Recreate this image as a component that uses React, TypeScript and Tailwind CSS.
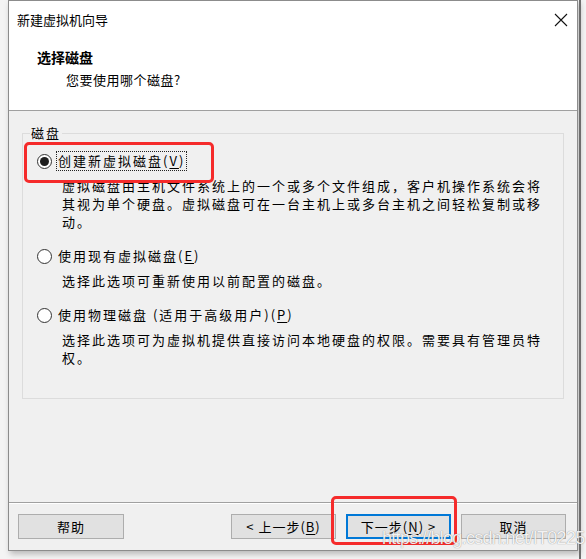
import React from 'react';

const font = { fontFamily: '"Noto Sans CJK SC", "Noto Sans", sans-serif' };

interface RadioProps {
  checked?: boolean;
}

const Radio: React.FC<RadioProps> = ({ checked }) => (
  <span className="w-[15px] h-[15px] rounded-full border border-[#333333] bg-white flex items-center justify-center shrink-0">
    {checked && <span className="w-[9px] h-[9px] rounded-full bg-[#1f1f1f]" />}
  </span>
);

const Key: React.FC<{ k: string }> = ({ k }) => (
  <>
    (<span className="underline underline-offset-2">{k}</span>)
  </>
);

const App: React.FC = () => {
  return (
    <div className="relative w-[586px] h-[559px] bg-[#f4f4f4] flex overflow-hidden" style={font}>
      {/* left gap */}
      <div className="w-[8px] shrink-0" />

      {/* Dialog */}
      <div className="w-[570px] h-[551px] bg-[#f0f0f0] border border-[#8c8c8c] flex flex-col shadow-[2px_3px_6px_rgba(0,0,0,0.25)] shrink-0 text-[#000000]">
        {/* Title bar */}
        <div className="h-[37px] bg-white flex items-center justify-between pl-[8px] pr-[8px]">
          <span className="text-[13px] leading-[18px]">新建虚拟机向导</span>
          <svg width="14" height="14" viewBox="0 0 14 14" className="mr-[1px]">
            <path d="M1 1 L13 13 M13 1 L1 13" stroke="#111" strokeWidth="1.1" />
          </svg>
        </div>

        {/* Header */}
        <div className="h-[72px] bg-white flex flex-col pt-[9px]">
          <span className="pl-[28px] text-[14px] leading-[20px] font-bold">选择磁盘</span>
          <span className="pl-[57px] mt-[4px] text-[13px] leading-[18px] tracking-[0.5px]">您要使用哪个磁盘?</span>
        </div>
        <div className="h-px bg-[#a0a0a0]" />

        {/* Body */}
        <div className="flex-1 flex flex-col px-[13px] pt-[22px]">
          <div className="relative h-[266px] border border-[#dcdcdc] pt-[15px] pl-[14px] text-[13px] tracking-[2px]">
            <span className="absolute -top-[10px] left-[7px] px-[1px] bg-[#f0f0f0] leading-[18px]">磁盘</span>

            <div className="h-[24px] flex items-center gap-[5px]">
              <Radio checked />
              <span className="outline outline-1 outline-dotted outline-[#222] px-[1px] leading-[18px]">
                创建新虚拟磁盘<Key k="V" />
              </span>
            </div>
            <div className="mt-[4px] pl-[25px] leading-[18px] whitespace-nowrap">
              虚拟磁盘由主机文件系统上的一个或多个文件组成，客户机操作系统会将
              <br />
              其视为单个硬盘。虚拟磁盘可在一台主机上或多台主机之间轻松复制或移
              <br />
              动。
            </div>

            <div className="mt-[13px] h-[24px] flex items-center gap-[6px]">
              <Radio />
              <span className="leading-[18px]">
                使用现有虚拟磁盘<Key k="E" />
              </span>
            </div>
            <div className="mt-[4px] pl-[25px] leading-[18px] whitespace-nowrap">
              选择此选项可重新使用以前配置的磁盘。
            </div>

            <div className="mt-[13px] h-[24px] flex items-center gap-[6px]">
              <Radio />
              <span className="leading-[18px] whitespace-nowrap">
                使用物理磁盘 (适用于高级用户)<Key k="P" />
              </span>
            </div>
            <div className="mt-[4px] pl-[25px] leading-[18px] whitespace-nowrap">
              选择此选项可为虚拟机提供直接访问本地硬盘的权限。需要具有管理员特
              <br />
              权。
            </div>
          </div>
        </div>

        {/* Footer */}
        <div className="h-px bg-[#a0a0a0]" />
        <div className="h-px bg-white" />
        <div className="h-[46px] flex items-start pt-[10px] pl-[9px] pr-[11px] text-[13px] tracking-[1px]">
          <button className="w-[106px] h-[25px] bg-[#e1e1e1] border border-[#adadad] flex items-center justify-center">
            帮助
          </button>
          <div className="flex-1" />
          <div className="flex gap-[10px]">
            <button className="w-[105px] h-[25px] bg-[#e1e1e1] border border-[#adadad] flex items-center justify-center">
              &lt; 上一步<Key k="B" />
            </button>
            <button className="w-[105px] h-[25px] bg-[#e1e1e1] border-2 border-[#0078d7] flex items-center justify-center">
              下一步<Key k="N" /> &gt;
            </button>
            <button className="w-[105px] h-[25px] bg-[#e1e1e1] border border-[#adadad] flex items-center justify-center">
              取消
            </button>
          </div>
        </div>
      </div>

      {/* right background strip */}
      <div className="w-[2px] h-full bg-[#6e6e6e] ml-[1px] shrink-0" />

      {/* Red annotation boxes */}
      <div className="absolute left-[24px] top-[142px] w-[190px] h-[41px] border-[3px] border-[#f52b2b] rounded-[5px]" />
      <div className="absolute left-[331px] top-[496px] w-[126px] h-[49px] border-[3px] border-[#f52b2b] rounded-[5px]" />

      {/* Watermark */}
      <span
        className="absolute left-[382px] top-[528px] text-[18px] leading-[20px] tracking-[-0.7px] text-white/90 [text-shadow:0_0_1px_rgba(0,0,0,0.5)]"
        style={{ fontFamily: '"Liberation Sans", Arial, sans-serif' }}
      >
        https://blog.csdn.net/IT0225
      </span>
    </div>
  );
};

export default App;
